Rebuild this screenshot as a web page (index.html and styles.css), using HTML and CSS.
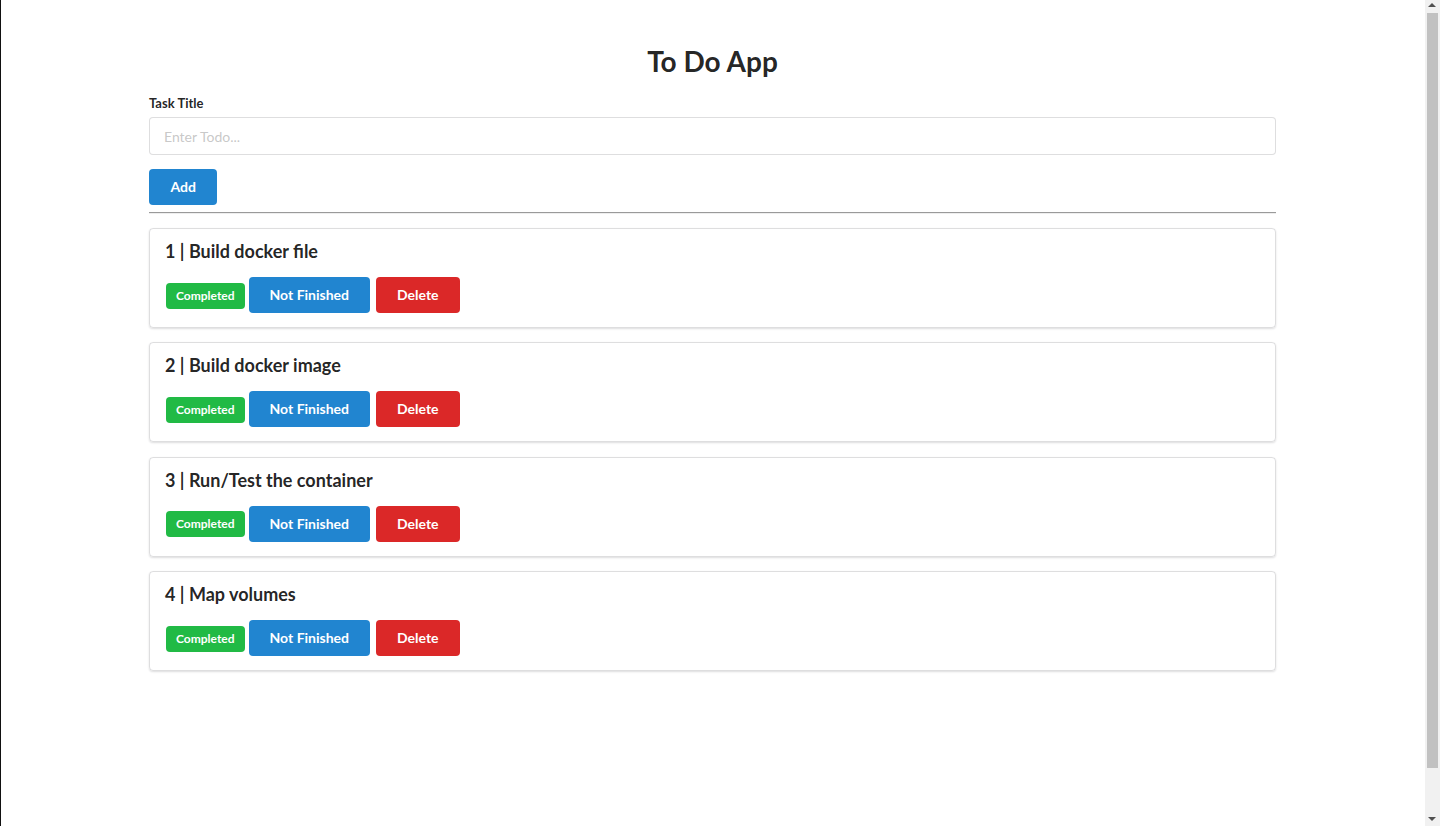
FILE: index.html
```html
<!DOCTYPE html>
<html lang="en">
<head>
<meta charset="utf-8">
<title>To Do App</title>
<link rel="stylesheet" href="styles.css">
</head>
<body>
<div class="page">
  <div class="container">
    <h1 class="app-title">To Do App</h1>
    <form class="todo-form">
      <label class="field-label" for="todo">Task Title</label>
      <input class="field-input" id="todo" type="text" placeholder="Enter Todo...">
      <button class="btn btn-blue btn-add" type="button">Add</button>
    </form>
    <hr class="divider">
    <div class="todo-list">
      <div class="card">
        <h3 class="card-title">1 | Build docker file</h3>
        <div class="card-actions">
          <span class="badge">Completed</span>
          <button class="btn btn-blue" type="button">Not Finished</button>
          <button class="btn btn-red" type="button">Delete</button>
        </div>
      </div>
      <div class="card">
        <h3 class="card-title">2 | Build docker image</h3>
        <div class="card-actions">
          <span class="badge">Completed</span>
          <button class="btn btn-blue" type="button">Not Finished</button>
          <button class="btn btn-red" type="button">Delete</button>
        </div>
      </div>
      <div class="card">
        <h3 class="card-title">3 | Run/Test the container</h3>
        <div class="card-actions">
          <span class="badge">Completed</span>
          <button class="btn btn-blue" type="button">Not Finished</button>
          <button class="btn btn-red" type="button">Delete</button>
        </div>
      </div>
      <div class="card">
        <h3 class="card-title">4 | Map volumes</h3>
        <div class="card-actions">
          <span class="badge">Completed</span>
          <button class="btn btn-blue" type="button">Not Finished</button>
          <button class="btn btn-red" type="button">Delete</button>
        </div>
      </div>
    </div>
  </div>
</div>
<div class="scrollbar">
  <span class="arrow arrow-up"></span>
  <span class="thumb"></span>
  <span class="arrow arrow-down"></span>
</div>
</body>
</html>
```
FILE: styles.css
```css
* { box-sizing: border-box; }

html, body {
  margin: 0;
  padding: 0;
  height: 100%;
  overflow: hidden;
}

body {
  font-family: Lato, "Liberation Sans", sans-serif;
  font-size: 14px;
  line-height: 20px;
  color: rgba(0, 0, 0, 0.87);
  background: #fff;
}

.page {
  height: 826px;
  margin-right: 15px;
  padding-right: 1px;
  border-left: 1px solid #111;
}

.container {
  width: 1127px;
  margin: 0 auto;
  padding-top: 43px;
}

.app-title {
  margin: 0 0 15px;
  font-size: 28px;
  line-height: 36px;
  font-weight: 700;
  text-align: center;
}

.todo-form {
  display: flex;
  flex-direction: column;
  align-items: flex-start;
}

.field-label {
  font-size: 13px;
  line-height: 18px;
  font-weight: 700;
  margin-bottom: 5px;
}

.field-input {
  width: 100%;
  height: 38px;
  padding: 0 14px;
  font-family: inherit;
  font-size: 14px;
  color: rgba(0, 0, 0, 0.87);
  border: 1px solid rgba(34, 36, 38, 0.15);
  border-radius: 4px;
  outline: none;
  margin-bottom: 14px;
}

.field-input::placeholder {
  color: rgba(191, 191, 191, 0.87);
}

.btn {
  display: inline-block;
  height: 36px;
  padding: 0 21px;
  border: none;
  border-radius: 4px;
  font-family: inherit;
  font-size: 14px;
  font-weight: 700;
  line-height: 36px;
  color: #fff;
  cursor: pointer;
}

.btn-add { padding: 0 21.5px; }

.btn-blue { background: #2185d0; }
.btn-red { background: #db2828; }

.divider {
  margin: 7px 0 14px;
  border: 0;
  border-top: 1px solid #9a9a9a;
  border-bottom: 1px solid #eee;
  height: 0;
}

.todo-list {
  display: flex;
  flex-direction: column;
  gap: 14.4px;
}

.card {
  height: 100px;
  padding: 10px 15px 0;
  border: 1px solid rgba(34, 36, 38, 0.15);
  border-radius: 4px;
  box-shadow: 0 1px 2px 0 rgba(34, 36, 38, 0.15);
}

.card-title {
  margin: 0 0 14px;
  font-size: 18px;
  line-height: 24px;
  font-weight: 700;
}

.card-actions {
  display: flex;
  align-items: center;
  gap: 4px;
}

.card-actions .btn-red { margin-left: 2px; }

.badge {
  display: inline-block;
  margin: 1px 0 0 1px;
  height: 26px;
  padding: 0 10px;
  border-radius: 4px;
  background: #21ba45;
  color: #fff;
  font-size: 12px;
  font-weight: 700;
  line-height: 26px;
}

.scrollbar {
  position: fixed;
  top: 0;
  right: 0;
  width: 15px;
  height: 100%;
  background: #f1f1f1;
}

.thumb {
  position: absolute;
  left: 2px;
  right: 2px;
  top: 13px;
  height: 755px;
  background: #c1c1c1;
}

.arrow {
  position: absolute;
  left: 3px;
  width: 0;
  height: 0;
  border-left: 4px solid transparent;
  border-right: 4px solid transparent;
}

.arrow-up {
  top: 3px;
  border-bottom: 4px solid #505050;
}

.arrow-down {
  bottom: 5px;
  border-top: 4px solid #505050;
}
```
